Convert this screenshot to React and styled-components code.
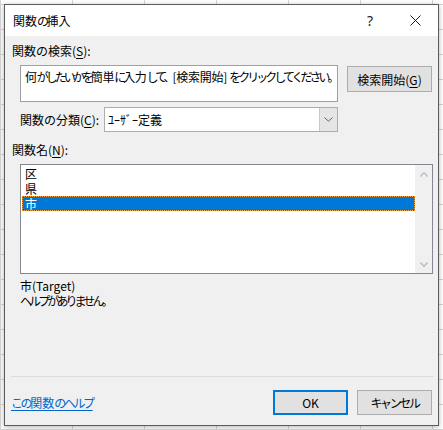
import React from "react";
import styled, { createGlobalStyle } from "styled-components";

const Global = createGlobalStyle`
  html, body { margin: 0; padding: 0; }
  body {
    width: 443px;
    height: 430px;
    overflow: hidden;
    background-color: #ffffff;
    background-image:
      linear-gradient(to right, #d4d4d4 1px, transparent 1px),
      linear-gradient(to bottom, #d4d4d4 1px, transparent 1px);
    background-size: 72px 25px, 72px 25px;
    background-position: 0 0, 0 4px;
    font-family: "Noto Sans CJK JP", sans-serif;
    font-size: 12px;
    color: #000;
  }
`;

/* Meiryo UI draws kana narrower than kanji; emulate with tighter kana runs */
const Run = styled.span`
  letter-spacing: ${(p) => p.$ls}px;
`;

const KANA_SPLIT = /([\u3040-\u30ff\u3001\u3002]+)/;
const KANA_TEST = /^[\u3040-\u30ff\u3001\u3002]+$/;

const Jp = ({ text, k = -3, other = -0.3 }) =>
  text
    .split(KANA_SPLIT)
    .filter(Boolean)
    .map((s, i) => (
      <Run key={i} $ls={KANA_TEST.test(s) ? k : other}>
        {s}
      </Run>
    ));

const Page = styled.div`
  padding: 4px 0 0 4px;
`;

const Dialog = styled.div`
  box-sizing: border-box;
  width: 435px;
  height: 422px;
  border: 1px solid #5c5c5c;
  background: #f0f0f0;
  display: flex;
  flex-direction: column;
  box-shadow: 0 1px 5px rgba(0, 0, 0, 0.3);
`;

const TitleBar = styled.div`
  height: 31px;
  background: #ffffff;
  display: flex;
  align-items: center;
  padding-left: 8px;
  flex-shrink: 0;
`;

const Title = styled.div`
  flex: 1;
  font-size: 12px;
  line-height: 15px;
`;

const TitleButton = styled.div`
  width: ${(p) => p.$w}px;
  height: 31px;
  display: flex;
  align-items: center;
  justify-content: center;
  font-family: "Noto Sans", sans-serif;
  font-size: 14px;
  color: #1a1a1a;
`;

const Body = styled.div`
  flex: 1;
  display: flex;
  flex-direction: column;
  padding: 0 5px 10px 7px;
`;

const Label = styled.div`
  line-height: 15px;
  margin-top: ${(p) => p.$mt || 0}px;
  white-space: nowrap;
  u { text-decoration-thickness: 1px; text-underline-offset: 2px; }
`;

const SearchRow = styled.div`
  display: flex;
  align-items: flex-start;
  margin-top: 7px;
  margin-left: 8px;
`;

const SearchBox = styled.div`
  box-sizing: border-box;
  width: 318px;
  height: 37px;
  background: #fff;
  border: 1px solid #a0a0a0;
  padding: 3px 4px;
  line-height: 15px;
  white-space: nowrap;
  overflow: hidden;
`;

const Button = styled.div`
  box-sizing: border-box;
  width: ${(p) => p.$w || 75}px;
  height: ${(p) => p.$h || 25}px;
  margin-top: ${(p) => p.$mt || 0}px;
  margin-left: ${(p) => p.$ml || 0}px;
  background: #e1e1e1;
  border: ${(p) => (p.$default ? "2px solid #0078d7" : "1px solid #adadad")};
  display: flex;
  align-items: center;
  justify-content: center;
  line-height: 15px;
  white-space: nowrap;
  u { text-decoration-thickness: 1px; text-underline-offset: 2px; }
`;

const CategoryRow = styled.div`
  display: flex;
  align-items: center;
  margin-top: 5px;
  margin-left: 8px;
`;

const CategoryLabel = styled(Label)`
  width: 84px;
`;

const Select = styled.div`
  box-sizing: border-box;
  width: 234px;
  height: 25px;
  border: 1px solid #adadad;
  background: #fff;
  display: flex;
`;

const SelectValue = styled.div`
  flex: 1;
  display: flex;
  align-items: center;
  padding-left: 3px;
`;

const SelectArrow = styled.div`
  width: 17px;
  background: #e5e5e5;
  border-left: 1px solid #c8c8c8;
  display: flex;
  align-items: center;
  justify-content: center;
`;

const ListBox = styled.div`
  box-sizing: border-box;
  width: 413px;
  height: 110px;
  margin-top: 7px;
  margin-left: 8px;
  border: 1px solid #828790;
  background: #fff;
  display: flex;
`;

const Items = styled.div`
  flex: 1;
  padding: 1px 0 0 1px;
`;

const Item = styled.div`
  box-sizing: border-box;
  height: 15px;
  line-height: 15px;
  padding-left: 3px;
  background: ${(p) => (p.$selected ? "#0078d7" : "transparent")};
  color: ${(p) => (p.$selected ? "#fff" : "#000")};
  outline: ${(p) => (p.$selected ? "1px dotted #f7a440" : "none")};
  outline-offset: -1px;
`;

const ScrollBar = styled.div`
  width: 17px;
  background: #f0f0f0;
  display: flex;
  flex-direction: column;
  justify-content: space-between;
  align-items: center;
  padding: 7px 0 6px;
`;

const Description = styled.div`
  flex: 1;
  margin-top: 4px;
  margin-left: 8px;
`;

const DescLine = styled.div`
  line-height: 15px;
`;

const Separator = styled.div`
  height: 1px;
  background: #dcdcdc;
  margin-left: -1px;
  margin-bottom: 13px;
`;

const Footer = styled.div`
  display: flex;
  align-items: center;
  margin-left: -1px;
  margin-right: 1px;
`;

const LinkWrap = styled.div`
  flex: 1;
`;

const HelpLink = styled.a`
  color: #0066cc;
  text-decoration: underline;
  text-decoration-thickness: 1px;
  text-underline-offset: 2px;
  line-height: 15px;
  cursor: pointer;
`;

const Chevron = ({ up, color, w = 8, h = 5, sw = 1 }) => (
  <svg width={w} height={h} viewBox={`0 0 ${w} ${h}`}>
    <polyline
      points={
        up
          ? `0.5,${h - 0.5} ${w / 2},0.8 ${w - 0.5},${h - 0.5}`
          : `0.5,0.5 ${w / 2},${h - 0.8} ${w - 0.5},0.5`
      }
      fill="none"
      stroke={color}
      strokeWidth={sw}
    />
  </svg>
);

const CloseIcon = () => (
  <svg width="11" height="11" viewBox="0 0 11 11">
    <path d="M0.5 0.5 L10.5 10.5 M10.5 0.5 L0.5 10.5" stroke="#1a1a1a" strokeWidth="1" />
  </svg>
);

export default function App() {
  return (
    <>
      <Global />
      <Page>
        <Dialog>
          <TitleBar>
            <Title>
              <Jp text="関数の挿入" k={-2.5} other={0} />
            </Title>
            <TitleButton $w={46}>?</TitleButton>
            <TitleButton $w={45}>
              <CloseIcon />
            </TitleButton>
          </TitleBar>
          <Body>
            <Label $mt={7}>
              関数の検索(<u>S</u>):
            </Label>
            <SearchRow>
              <SearchBox>
                <Jp text="何がしたいかを簡単に入力して、[検索開始] をクリックしてください。" k={-3} />
              </SearchBox>
              <Button $w={85} $h={26} $mt={1} $ml={9}>
                検索開始(<u>G</u>)
              </Button>
            </SearchRow>
            <CategoryRow>
              <CategoryLabel>
                関数の分類(<u>C</u>):
              </CategoryLabel>
              <Select>
                <SelectValue>ﾕｰｻﾞｰ定義</SelectValue>
                <SelectArrow>
                  <Chevron color="#606060" w={9} h={5} />
                </SelectArrow>
              </Select>
            </CategoryRow>
            <Label $mt={10}>
              関数名(<u>N</u>):
            </Label>
            <ListBox>
              <Items>
                <Item>区</Item>
                <Item>県</Item>
                <Item $selected>市</Item>
              </Items>
              <ScrollBar>
                <Chevron up color="#c2c2c2" w={8} h={5} sw={1.6} />
                <Chevron color="#c2c2c2" w={8} h={5} sw={1.6} />
              </ScrollBar>
            </ListBox>
            <Description>
              <DescLine>市(Target)</DescLine>
              <DescLine>
                <Jp text="ヘルプがありません。" k={-2.9} />
              </DescLine>
            </Description>
            <Separator />
            <Footer>
              <LinkWrap>
                <HelpLink>
                  <Jp text="この関数のヘルプ" k={-2.4} other={0} />
                </HelpLink>
              </LinkWrap>
              <Button $default>OK</Button>
              <Button $ml={9}>
                <Jp text="キャンセル" k={-2.4} />
              </Button>
            </Footer>
          </Body>
        </Dialog>
      </Page>
    </>
  );
}
